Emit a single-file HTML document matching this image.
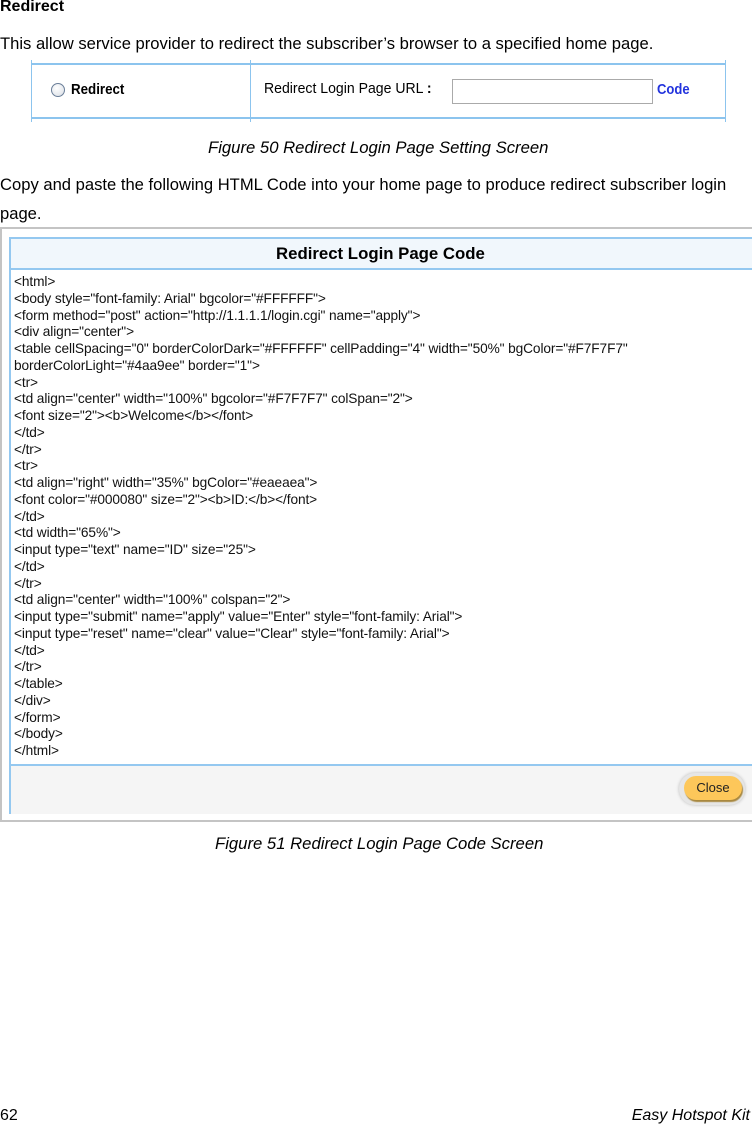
<!DOCTYPE html>
<html><head><style>
body{margin:0;width:752px;height:1127px;position:relative;background:#fff;font-family:"Liberation Sans",Arial,sans-serif;color:#000}
.a{position:absolute;white-space:nowrap}
.p{font-size:16.6px}
.code{position:absolute;left:14px;top:274px;font-size:13.7px;line-height:16.75px;color:#111;white-space:nowrap;letter-spacing:-0.1px}
</style></head><body>
<div class="a" style="left:0;top:-2px;font-weight:bold;font-size:16px">Redirect</div>
<div class="a p" style="left:0;top:34px">This allow service provider to redirect the subscriber’s browser to a specified home page.</div>
<!-- figure 50 -->
<div class="a" style="left:31px;top:63px;width:695px;height:56px;border-top:2px solid #8cc4ee;border-bottom:2px solid #8cc4ee;box-sizing:border-box"></div>
<div class="a" style="left:31px;top:60px;width:1px;height:62px;background:#8cc4ee"></div>
<div class="a" style="left:250px;top:60px;width:1px;height:62px;background:#8cc4ee"></div>
<div class="a" style="left:725px;top:60px;width:1px;height:62px;background:#8cc4ee"></div>
<div class="a" style="left:51px;top:83px;width:12px;height:12px;border:1.5px solid #6a7e98;border-radius:50%;background:radial-gradient(circle at 40% 35%,#fff,#d8dde4)"></div>
<div class="a" style="left:71px;top:82px;font-size:14.5px;font-weight:bold;transform:scaleX(.92);transform-origin:left">Redirect</div>
<div class="a" style="left:264px;top:81px;font-size:14.5px;transform:scaleX(.97);transform-origin:left">Redirect Login Page URL <b>:</b></div>
<div class="a" style="left:452px;top:79px;width:201px;height:25px;border:1px solid #aaa;box-sizing:border-box"></div>
<div class="a" style="left:657px;top:82px;font-size:14.5px;font-weight:bold;color:#2233dd;transform:scaleX(.9);transform-origin:left">Code</div>
<div class="a" style="left:208px;top:138px;font-size:16.7px;font-style:italic">Figure 50 Redirect Login Page Setting Screen</div>
<div class="a p" style="left:0;top:175px">Copy and paste the following HTML Code into your home page to produce redirect subscriber login</div>
<div class="a p" style="left:0;top:204px">page.</div>
<!-- figure 51 -->
<div class="a" style="left:0;top:227px;width:752px;height:595px;border:2px solid #c4c4c4;border-right:none;box-sizing:border-box"></div>
<div class="a" style="left:9px;top:237px;width:743px;height:577px;border:2px solid #94c8f0;border-right:none;box-sizing:border-box"></div>
<div class="a" style="left:11px;top:239px;width:741px;height:29px;background:#f1f7fc;border-bottom:2px solid #94c8f0"></div>
<div class="a" style="left:276px;top:244px;font-size:16.8px;font-weight:bold">Redirect Login Page Code</div>
<div class="a" style="left:11px;top:764px;width:741px;height:48px;background:#f5f5f5;border-top:2px solid #94c8f0"></div>
<div class="a" style="left:679px;top:773px;width:66px;height:32px;border-radius:16px;background:#e6e6e6;box-shadow:0 0 3px #bbb"></div>
<div class="a" style="left:684px;top:776px;width:58px;height:24px;border-radius:12px;background:#fdc75a;box-shadow:1px 2px 1px #a88840;font-size:13px;line-height:24px;text-align:center;color:#222">Close</div>
<div class="code">&lt;html&gt;<br>&lt;body style="font-family: Arial" bgcolor="#FFFFFF"&gt;<br>&lt;form method="post" action="http://1.1.1.1/login.cgi" name="apply"&gt;<br>&lt;div align="center"&gt;<br>&lt;table cellSpacing="0" borderColorDark="#FFFFFF" cellPadding="4" width="50%" bgColor="#F7F7F7"<br>borderColorLight="#4aa9ee" border="1"&gt;<br>&lt;tr&gt;<br>&lt;td align="center" width="100%" bgcolor="#F7F7F7" colSpan="2"&gt;<br>&lt;font size="2"&gt;&lt;b&gt;Welcome&lt;/b&gt;&lt;/font&gt;<br>&lt;/td&gt;<br>&lt;/tr&gt;<br>&lt;tr&gt;<br>&lt;td align="right" width="35%" bgColor="#eaeaea"&gt;<br>&lt;font color="#000080" size="2"&gt;&lt;b&gt;ID:&lt;/b&gt;&lt;/font&gt;<br>&lt;/td&gt;<br>&lt;td width="65%"&gt;<br>&lt;input type="text" name="ID" size="25"&gt;<br>&lt;/td&gt;<br>&lt;/tr&gt;<br>&lt;td align="center" width="100%" colspan="2"&gt;<br>&lt;input type="submit" name="apply" value="Enter" style="font-family: Arial"&gt;<br>&lt;input type="reset" name="clear" value="Clear" style="font-family: Arial"&gt;<br>&lt;/td&gt;<br>&lt;/tr&gt;<br>&lt;/table&gt;<br>&lt;/div&gt;<br>&lt;/form&gt;<br>&lt;/body&gt;<br>&lt;/html&gt;</div>
<div class="a" style="left:215px;top:834px;font-size:16.7px;font-style:italic">Figure 51 Redirect Login Page Code Screen</div>
<div class="a" style="left:0;top:1107px;font-size:16px">62</div>
<div class="a" style="right:2px;top:1107px;font-style:italic;font-size:16px">Easy Hotspot Kit</div>
</body></html>
